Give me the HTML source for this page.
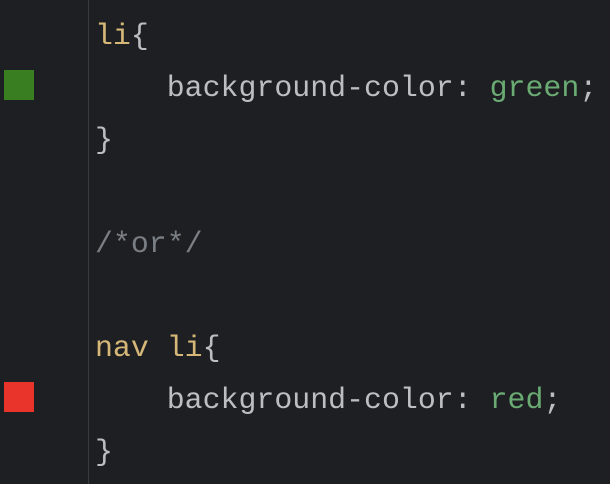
<!DOCTYPE html>
<html><head><meta charset="utf-8"><style>
html,body{margin:0;padding:0;background:#1e1f22;width:610px;height:484px;overflow:hidden}
.g{position:absolute;left:88px;top:0;width:1px;height:484px;background:#393b40}
.sw{position:absolute;left:4px;width:30px;height:30px}
.l{position:absolute;left:95px;font-family:"Liberation Mono",monospace;font-size:29.9px;line-height:52px;height:52px;color:#bcbec4;white-space:pre}
.k{color:#d5b778}.v{color:#6aab73}.c{color:#7a7e85}
</style></head><body>
<div class="g"></div>
<div class="sw" style="top:70px;background:#3a7e22"></div>
<div class="sw" style="top:382px;background:#e8342a"></div>
<div class="l" style="top:10px"><span class="k">li</span>{</div>
<div class="l" style="top:62px">    background-color: <span class="v">green</span>;</div>
<div class="l" style="top:114px">}</div>
<div class="l c" style="top:218px">/*or*/</div>
<div class="l" style="top:322px"><span class="k">nav li</span>{</div>
<div class="l" style="top:374px">    background-color: <span class="v">red</span>;</div>
<div class="l" style="top:426px">}</div>
</body></html>
